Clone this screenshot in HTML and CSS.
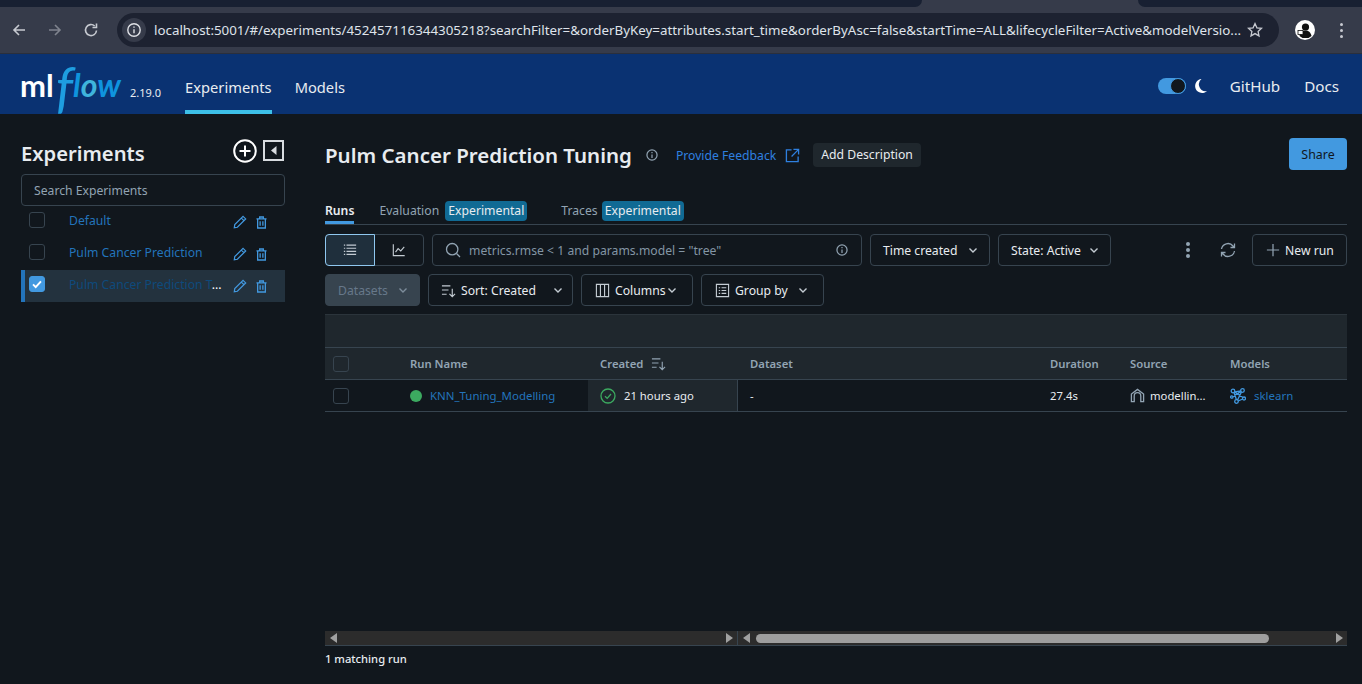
FILE: index.html
```html
<!DOCTYPE html>
<html lang="en">
<head>
    <meta charset="UTF-8" />
    <title>MLflow</title>
    <link rel="stylesheet" href="styles.css">
</head>
<body>

<!-- Browser toolbar -->
<div class="tabstrip"><div class="tab-left"></div><div class="tab-right"></div></div>
<div class="browserbar">
    <svg class="nav-icon nav-back" viewBox="0 0 16 16"><path d="M14 8H3M8 3L3 8l5 5" /></svg>
    <svg class="nav-icon nav-forward" viewBox="0 0 16 16"><path d="M2 8h11M8 3l5 5-5 5" /></svg>
    <svg class="nav-icon nav-reload" viewBox="0 0 16 16"><path d="M13.500 8.500A5.500 5.500 0 1 1 11.700 4M13.500 1.500V5.500H9.500" /></svg>
    <div class="urlbar">
        <span class="url-info"><svg viewBox="0 0 16 16"><circle cx="8" cy="8" r="6.200" /><path d="M8 7.200v4M8 4.400v1.400" /></svg></span>
        <span class="url-text">localhost:5001/#/experiments/452457116344305218?searchFilter=&amp;orderByKey=attributes.start_time&amp;orderByAsc=false&amp;startTime=ALL&amp;lifecycleFilter=Active&amp;modelVersio...</span>
        <svg class="url-star" viewBox="0 0 16 16"><path d="M8 1.600l1.900 4.200 4.600.5-3.400 3.100.9 4.500L8 11.600l-4 2.300.9-4.500L1.500 6.300l4.600-.5z" /></svg>
    </div>
    <svg class="avatar" viewBox="0 0 20 20"><circle cx="10" cy="10" r="10" fill="#fff" /><circle cx="10.500" cy="7" r="3.600" fill="#111" /><path d="M4.500 16c.5-4 3-5.500 6-5.500s5 1.500 6 5.500l-3 2h-6z" fill="#111" /><rect x="3" y="10.500" width="5" height="4" fill="#fff" stroke="#111" stroke-width=".8" /></svg>
    <div class="kebab"><i></i><i></i><i></i></div>
</div>

<!-- App header -->
<header class="topbar">
    <div class="logo"><span class="logo-ml">ml</span><span class="logo-f">f</span><span class="logo-flow">l<span class="logo-o">o</span>w</span></div>
    <span class="version">2.19.0</span>
    <nav class="nav-main">
        <a class="nav-link active">Experiments</a>
        <a class="nav-link">Models</a>
    </nav>
    <div class="nav-right">
        <div class="toggle"><span class="toggle-knob"></span></div>
        <svg class="moon" viewBox="0 0 14 16"><path d="M8.500 1A7 7 0 1 0 14 13 6.800 6.800 0 0 1 8.500 1z" /></svg>
        <a class="nav-link">GitHub</a>
        <a class="nav-link">Docs</a>
    </div>
</header>

<main class="layout">
    <aside class="sidebar">
        <div class="sidebar-head">
            <h1>Experiments</h1>
            <svg class="icon-add" viewBox="0 0 24 24"><circle cx="12" cy="12" r="10.800" /><path d="M12 6.500v11M6.500 12h11" /></svg>
            <svg class="icon-collapse" viewBox="0 0 21 21"><rect x="1" y="1" width="19" height="19" /><path class="solid" d="M13.500 6v9l-5.500-4.500z" /></svg>
        </div>
        <div class="search-exp">Search Experiments</div>
        <div class="exp-row">
            <span class="check"></span>
            <span class="exp-name">Default</span>
            <svg class="row-icon" viewBox="0 0 16 16"><path d="M11.500 1.500l3 3L5 14l-3.500.5L2 11zM9.500 3.500l3 3" /></svg>
            <svg class="row-icon trash" viewBox="0 0 12 14"><path d="M.5 3h11M4 3V1h4v2M1.800 3v10h8.400V3M4.500 5.500v5M7.500 5.500v5" /></svg>
        </div>
        <div class="exp-row">
            <span class="check"></span>
            <span class="exp-name">Pulm Cancer Prediction</span>
            <svg class="row-icon" viewBox="0 0 16 16"><path d="M11.500 1.500l3 3L5 14l-3.500.5L2 11zM9.500 3.500l3 3" /></svg>
            <svg class="row-icon trash" viewBox="0 0 12 14"><path d="M.5 3h11M4 3V1h4v2M1.800 3v10h8.400V3M4.500 5.500v5M7.500 5.500v5" /></svg>
        </div>
        <div class="exp-row selected">
            <span class="check checked"><svg viewBox="0 0 16 16"><path d="M3.500 8.500l3 3 6-6.500" /></svg></span>
            <span class="exp-name">Pulm Cancer Prediction T<span class="exp-more">...</span></span>
            <svg class="row-icon" viewBox="0 0 16 16"><path d="M11.500 1.500l3 3L5 14l-3.500.5L2 11zM9.500 3.500l3 3" /></svg>
            <svg class="row-icon trash" viewBox="0 0 12 14"><path d="M.5 3h11M4 3V1h4v2M1.800 3v10h8.400V3M4.500 5.500v5M7.500 5.500v5" /></svg>
        </div>
    </aside>

    <section class="content">
        <div class="title-row">
            <h2>Pulm Cancer Prediction Tuning</h2>
            <svg class="icon-info" viewBox="0 0 16 16"><circle cx="8" cy="8" r="5.800" /><path d="M8 7.300v4M8 4.500v1.500" /></svg>
            <a class="feedback">Provide Feedback</a>
            <svg class="icon-external" viewBox="0 0 16 16"><path d="M7 2H1.500v12.500H14V9M9 1.500h5.500V7M14.500 1.500L7 9" /></svg>
            <span class="add-desc">Add Description</span>
            <button class="btn-share">Share</button>
        </div>

        <div class="tabs">
            <span class="tab active">Runs</span>
            <span class="tab tab-eval">Evaluation <b class="tag">Experimental</b></span>
            <span class="tab tab-traces">Traces <b class="tag">Experimental</b></span>
        </div>

        <div class="toolbar first">
            <div class="view-switch">
                <span class="view-btn on"><svg viewBox="0 0 16 16"><path d="M1 2.500h1.500M4 2.500h11M1 6h1.500M4 6h11M1 9.500h1.500M4 9.500h11M1 13h1.500M4 13h11" /></svg></span>
                <span class="view-btn"><svg viewBox="0 0 16 16"><path d="M1.500 1.500v13h13M4 10.500l3-4 3 2.500 4-4.500" /></svg></span>
            </div>
            <div class="run-search">
                <svg class="icon-search" viewBox="0 0 16 16"><circle cx="7.200" cy="7.200" r="5.700" /><path d="M11.500 11.500l3.500 3.500" /></svg>
                <span class="search-text">metrics.rmse &lt; 1 and params.model = "tree"</span>
                <svg class="icon-info light" viewBox="0 0 16 16"><circle cx="8" cy="8" r="5.800" /><path d="M8 7.300v4M8 4.500v1.500" /></svg>
            </div>
            <span class="btn btn-time">Time created <svg class="chev" viewBox="0 0 12 12"><path d="M2.500 4.500L6 8l3.500-3.500" /></svg></span>
            <span class="btn btn-state">State: Active <svg class="chev" viewBox="0 0 12 12"><path d="M2.500 4.500L6 8l3.500-3.500" /></svg></span>
            <div class="toolbar-right">
                <span class="dots"><i></i><i></i><i></i></span>
                <svg class="icon-refresh" viewBox="0 0 16 16"><path d="M1.500 7A6.500 6.500 0 0 1 13 4l1.500 1.500M14.500 1.500v4h-4M14.500 9A6.500 6.500 0 0 1 3 12l-1.500-1.500M1.500 14.500v-4h4" /></svg>
                <span class="btn btn-new"><svg class="icon-plus" viewBox="0 0 16 16"><path d="M8 1v14M1 8h14" /></svg>New run</span>
            </div>
        </div>

        <div class="toolbar">
            <span class="btn btn-datasets">Datasets <svg class="chev" viewBox="0 0 12 12"><path d="M2.500 4.500L6 8l3.500-3.500" /></svg></span>
            <span class="btn btn-sort"><svg class="icon-sort" viewBox="0 0 16 16"><path d="M1 3h9M1 7.500h7M1 12h5M12 6v8.500M9 11.500l3 3 3-3" /></svg>Sort: Created <svg class="chev" viewBox="0 0 12 12"><path d="M2.500 4.500L6 8l3.500-3.500" /></svg></span>
            <span class="btn btn-cols"><svg class="icon-cols" viewBox="0 0 16 16"><path d="M1.500 1.500h13v13h-13zM5.800 1.500v13M10.200 1.500v13" /></svg>Columns <svg class="chev" viewBox="0 0 12 12"><path d="M2.500 4.500L6 8l3.500-3.500" /></svg></span>
            <span class="btn btn-group"><svg class="icon-groupby" viewBox="0 0 16 16"><path d="M1.500 1.500h13v13h-13zM4 5h1.500M7 5h5M4 8h1.500M7 8h5M4 11h1.500M7 11h5" /></svg>Group by <svg class="chev" viewBox="0 0 12 12"><path d="M2.500 4.500L6 8l3.500-3.500" /></svg></span>
        </div>

        <div class="table">
            <div class="table-band"></div>
            <div class="table-row table-head">
                <div class="cell"><span class="check"></span></div>
                <div class="cell">Run Name</div>
                <div class="cell">Created <svg class="icon-sort head-sort" viewBox="0 0 16 16"><path d="M1 3h9M1 7.500h7M1 12h5M12 6v8.500M9 11.500l3 3 3-3" /></svg></div>
                <div class="cell">Dataset</div>
                <div class="cell">Duration</div>
                <div class="cell">Source</div>
                <div class="cell">Models</div>
            </div>
            <div class="table-row table-body">
                <div class="cell"><span class="check"></span></div>
                <div class="cell"><span class="dot"></span><a class="run-link">KNN_Tuning_Modelling</a></div>
                <div class="cell cell-created">
                    <svg class="icon-ok" viewBox="0 0 16 16"><circle cx="8" cy="8" r="7" /><path d="M5 8.200l2.200 2.200L11 6" /></svg>
                    21 hours ago
                </div>
                <div class="cell">-</div>
                <div class="cell">27.4s</div>
                <div class="cell"><svg class="icon-home" viewBox="0 0 16 16"><path d="M1.500 14.500V6.500L8 1.500l6.500 5v8h-3V8.500a3.500 3.500 0 0 0-7 0v6z" /></svg>modellin...</div>
                <div class="cell"><svg class="icon-model" viewBox="0 0 16 16"><circle cx="3" cy="3" r="1.800" /><circle cx="12.500" cy="2.500" r="1.800" /><circle cx="6.500" cy="13.500" r="1.800" /><circle cx="14" cy="10.500" r="1.500" /><circle cx="1.800" cy="9" r="1.200" /><path d="M4.500 4L11 3M4 4.500l2.500 7.500M11.500 4L7.500 12M8.200 13l4.500-2M4.500 4l8.500 5.500M3 8.500l8-5" /></svg><a class="run-link">sklearn</a></div>
            </div>
            <div class="table-space"></div>
            <div class="scrollbars">
                <div class="scroll scroll-left"><i class="arrow arrow-l"></i><i class="arrow arrow-r"></i></div>
                <div class="scroll scroll-right"><i class="arrow arrow-l"></i><span class="thumb"></span><i class="arrow arrow-r"></i></div>
            </div>
        </div>
        <div class="matching">1 matching run</div>
    </section>
</main>

</body>
</html>
```
FILE: styles.css
```css
html, body {
    height: 100%;
}
body {
    margin: 0;
    height: 684px;
    overflow: hidden;
    display: flex;
    flex-direction: column;
    background: #11171d;
    color: #e8ecf0;
    font-family: "Noto Sans", "Open Sans", sans-serif;
    font-size: 12.2px;
}
svg {
    fill: none;
    stroke: currentColor;
    flex: none;
}
h1, h2 {
    margin: 0;
    font-weight: 600;
}

/* Browser toolbar */
.tabstrip {
    height: 7px;
    background: #363b4a;
    flex: none;
    display: flex;
    justify-content: space-between;
}
.tab-left {
    width: 922px;
    background: #182032;
    border-radius: 0 0 8px 0;
}
.tab-right {
    width: 224px;
    background: #182032;
    border-radius: 0 0 0 8px;
}
.browserbar {
    height: 46px;
    flex: none;
    background: #363b4a;
    border-bottom: 1px solid #2a2f3c;
    display: flex;
    align-items: center;
}
.nav-icon {
    width: 16px;
    height: 16px;
    stroke: #c7cad1;
    stroke-width: 1.6;
}
.nav-back { margin-left: 11px; }
.nav-forward { margin-left: 20px; stroke: #7f838e; }
.nav-reload { margin-left: 20px; }
.urlbar {
    margin-left: 18px;
    width: 1162px;
    height: 34px;
    background: #1d2231;
    border-radius: 17px;
    display: flex;
    align-items: center;
}
.url-info {
    width: 24px;
    height: 24px;
    margin-left: 5px;
    border-radius: 50%;
    background: #363b4a;
    display: flex;
    align-items: center;
    justify-content: center;
}
.url-info svg {
    width: 16px;
    height: 16px;
    stroke: #dfe1e6;
    stroke-width: 1.4;
}
.url-text {
    margin-left: 8px;
    width: 1053px;
    white-space: nowrap;
    font-size: 13.35px;
    color: #dfe3ea;
}
.url-star {
    width: 16px;
    height: 16px;
    margin-left: 40px;
    stroke: #c7cad1;
    stroke-width: 1.3;
}
.avatar {
    width: 20px;
    height: 20px;
    margin-left: 16px;
    stroke: none;
}
.kebab {
    margin-left: 25px;
    display: flex;
    flex-direction: column;
    gap: 3px;
}
.kebab i {
    width: 3px;
    height: 3px;
    border-radius: 50%;
    background: #c7cad1;
}

/* App header */
.topbar {
    height: 60px;
    flex: none;
    background: #0a3272;
    display: flex;
    align-items: center;
    padding: 0 23px 0 20px;
}
.logo {
    width: 108px;
    height: 60px;
    align-self: flex-start;
    font-family: "Lato", sans-serif;
    line-height: 60px;
    font-size: 33px;
    white-space: nowrap;
}
.logo-ml {
    color: #fff;
    font-weight: 700;
    font-size: 31px;
}
.logo-f {
    color: #1e9ee0;
    font-style: italic;
    font-size: 54px;
    line-height: 0;
    vertical-align: -9px;
    margin-left: 2px;
}
.logo-flow {
    color: #0f94de;
    font-style: italic;
    font-weight: 700;
    font-size: 32px;
}
.logo-o {
    color: #3fb4dc;
}
.version {
    font-size: 11px;
    margin: 16px 0 0 2px;
    color: #e8ecf0;
}
.nav-main {
    margin-left: 24px;
    display: flex;
    gap: 23px;
    align-self: stretch;
}
.nav-link {
    color: #e8ecf0;
    font-size: 14.7px;
    line-height: 66px;
    display: block;
}
.nav-main .active {
    border-bottom: 4px solid #3dc0e8;
    box-sizing: border-box;
    height: 60px;
}
.nav-right {
    margin-left: auto;
    padding-top: 4px;
    display: flex;
    align-items: center;
}
.toggle {
    width: 28px;
    height: 16px;
    border-radius: 8px;
    background: #4299e0;
    display: flex;
    justify-content: flex-end;
}
.toggle-knob {
    width: 14px;
    height: 14px;
    border-radius: 50%;
    background: #11171d;
    border: 1px solid #4299e0;
}
.moon {
    width: 14px;
    height: 16px;
    margin: 0 15px 0 7px;
    fill: #fff;
    stroke: none;
}
.nav-right .nav-link {
    font-size: 15.2px;
    line-height: 22px;
    margin-left: 8px;
    margin-right: 16px;
}
.nav-right .nav-link:last-child {
    margin-right: 0;
}

/* Page */
.layout {
    flex: 1;
    display: flex;
    min-height: 0;
}
.sidebar {
    width: 264px;
    margin-left: 21px;
    padding-top: 24px;
    flex: none;
}
.sidebar-head {
    height: 32px;
    margin-bottom: 4px;
    display: flex;
    align-items: center;
}
.sidebar-head h1 {
    font-size: 20.2px;
    flex: 1;
    margin-top: -2px;
}
.icon-add {
    width: 24px;
    height: 24px;
    align-self: flex-start;
    margin-top: 1px;
    stroke: #fff;
    stroke-width: 2;
}
.icon-collapse {
    width: 21px;
    height: 21px;
    align-self: flex-start;
    margin: 2px 1px 0 6px;
    stroke: #d8dce0;
    stroke-width: 2;
}
.icon-collapse .solid {
    fill: #d8dce0;
    stroke: none;
}
.search-exp {
    height: 32px;
    box-sizing: border-box;
    border: 1px solid #37444f;
    border-radius: 4px;
    padding: 0 12px;
    line-height: 31px;
    color: #92a4b3;
}
.exp-row {
    height: 32px;
    display: flex;
    align-items: center;
    padding-left: 8px;
    box-sizing: border-box;
}
.exp-row.selected {
    background: #23323e;
    border-left: 4px solid #2374bb;
    padding-left: 4px;
}
.check {
    width: 16px;
    height: 16px;
    box-sizing: border-box;
    border: 1px solid #37444f;
    border-radius: 3px;
    display: block;
    flex: none;
}
.exp-row .check {
    margin-top: -4px;
}
.check.checked {
    background: #4299e0;
    border-color: #4299e0;
    display: flex;
}
.check.checked svg {
    width: 14px;
    height: 14px;
    stroke: #fff;
    stroke-width: 2.2;
}
.exp-name {
    margin-left: 24px;
    width: 157px;
    white-space: nowrap;
    color: #2374bb;
    margin-top: -3px;
}
.selected .exp-name {
    color: #0e4a7c;
}
.exp-more {
    color: #fff;
}
.row-icon {
    width: 14px;
    height: 14px;
    margin-left: 7px;
    stroke: #4299e0;
    stroke-width: 1.4;
}
.row-icon.trash {
    width: 11px;
    height: 13px;
    margin-left: 9px;
}

.content {
    flex: 1;
    margin: 0 15px 0 40px;
    padding-top: 24px;
    min-width: 0;
    display: flex;
    flex-direction: column;
}
.title-row {
    height: 32px;
    display: flex;
    align-items: center;
    flex: none;
}
.title-row h2 {
    font-size: 20.5px;
    margin-top: 2px;
}
.title-row .icon-info,
.title-row .feedback,
.title-row .icon-external,
.title-row .add-desc {
    margin-top: 2px;
}
.icon-info {
    width: 14px;
    height: 14px;
    margin-left: 13px;
    stroke: #92a4b3;
    stroke-width: 1.4;
}
.feedback {
    margin-left: 17px;
    color: #2f80e0;
}
.icon-external {
    width: 15px;
    height: 15px;
    margin-left: 9px;
    stroke: #2f80e0;
    stroke-width: 1.4;
}
.add-desc {
    margin-left: 13px;
    height: 24px;
    line-height: 24px;
    padding: 0 8px;
    background: #1f272d;
    border-radius: 4px;
}
.btn-share {
    margin-left: auto;
    width: 58px;
    height: 32px;
    background: #4299e0;
    color: #11171d;
    border: none;
    border-radius: 4px;
    font: inherit;
    font-size: 12.4px;
}

.tabs {
    margin-top: 24px;
    height: 31px;
    box-sizing: border-box;
    border-bottom: 1px solid #37444f;
    display: flex;
    gap: 25px;
    flex: none;
}
.tab {
    color: #92a4b3;
    line-height: 20px;
    height: 30px;
    box-sizing: border-box;
    padding-top: 7px;
    white-space: nowrap;
}
.tab-traces {
    margin-left: 9px;
}
.tab.active {
    color: #e8ecf0;
    font-weight: 600;
    border-bottom: 3px solid #4299e0;
}
.tag {
    display: inline-block;
    background: #106a94;
    color: #e8ecf0;
    font-weight: 400;
    line-height: 20px;
    padding: 0 3px;
    border-radius: 4px;
    margin-left: 1px;
}
.tab-eval .tag {
    margin-left: 3px;
}

.toolbar {
    margin-top: 8px;
    height: 32px;
    display: flex;
    gap: 8px;
    flex: none;
}
.toolbar.first {
    margin-top: 9px;
}
.view-switch {
    width: 99px;
    display: flex;
    border: 1px solid #37444f;
    border-radius: 4px;
    box-sizing: border-box;
}
.view-btn {
    flex: 1;
    display: flex;
    align-items: center;
    justify-content: center;
}
.view-btn svg {
    width: 14px;
    height: 14px;
    stroke: #c4ccd3;
    stroke-width: 1.3;
}
.view-btn.on {
    flex: 0 0 50px;
    box-sizing: border-box;
    margin: -1px 0 -1px -1px;
    background: #1f2f3c;
    border: 1px solid #8fc7ef;
    border-radius: 4px 0 0 4px;
}
.run-search {
    width: 430px;
    box-sizing: border-box;
    border: 1px solid #37444f;
    border-radius: 4px;
    display: flex;
    align-items: center;
    padding: 0 12px;
}
.icon-search {
    width: 16px;
    height: 16px;
    stroke: #92a4b3;
    stroke-width: 1.3;
}
.search-text {
    margin-left: 8px;
    flex: 1;
    color: #8396a5;
    white-space: nowrap;
}
.run-search .icon-info {
    margin-left: 0;
}
.btn {
    height: 32px;
    box-sizing: border-box;
    border: 1px solid #37444f;
    border-radius: 4px;
    display: flex;
    align-items: center;
    padding: 0 0 0 12px;
    white-space: nowrap;
}
.chev {
    width: 12px;
    height: 12px;
    margin-left: auto;
    stroke: #c4ccd3;
    stroke-width: 1.4;
}
.btn-time { width: 120px; padding-right: 10px; }
.btn-state { width: 113px; padding-right: 10px; }
.btn-datasets { width: 95px; padding-right: 10px; }
.btn-sort { width: 145px; padding-right: 8px; }
.btn-cols { width: 112px; padding-left: 13px; padding-right: 14px; }
.btn-group { width: 123px; padding-left: 13px; padding-right: 14px; }
.btn-new { width: 95px; padding-left: 13px; margin-left: 16px; }
.toolbar-right {
    margin-left: auto;
    display: flex;
    align-items: center;
}
.dots {
    display: flex;
    flex-direction: column;
    gap: 2px;
}
.dots i {
    width: 4px;
    height: 4px;
    border-radius: 50%;
    background: #92a4b3;
}
.icon-refresh {
    width: 16px;
    height: 16px;
    margin-left: 30px;
    stroke: #92a4b3;
    stroke-width: 1.3;
}
.icon-plus {
    width: 14px;
    height: 14px;
    margin-right: 5px;
    stroke: #92a4b3;
    stroke-width: 1.4;
}
.btn-datasets {
    background: #37444f;
    color: #67788a;
}
.btn-datasets .chev {
    stroke: #7d8d9b;
}
.icon-sort, .icon-cols, .icon-groupby {
    width: 15px;
    height: 15px;
    margin-right: 5px;
    stroke: #c4ccd3;
    stroke-width: 1.2;
}

/* Runs table */
.table {
    margin-top: 8px;
    flex: 1;
    min-height: 0;
    display: flex;
    flex-direction: column;
}
.table-band {
    height: 34px;
    box-sizing: border-box;
    background: #1f272d;
    border-top: 1px solid #2b343b;
    border-bottom: 1px solid #37444f;
    flex: none;
}
.table-row {
    height: 32px;
    box-sizing: border-box;
    display: grid;
    grid-template-columns: 73px 190px 150px 300px 80px 100px 129px;
    border-bottom: 1px solid #37444f;
    flex: none;
    font-size: 11.3px;
}
.table-head {
    background: #1f272d;
    color: #92a4b3;
    font-weight: 600;
}
.cell {
    display: flex;
    align-items: center;
    padding-left: 12px;
    white-space: nowrap;
    min-width: 0;
}
.cell:first-child {
    padding-left: 8px;
}
.head-sort {
    margin: 0 0 0 8px;
    stroke: #92a4b3;
}
.cell-created {
    background: #1f272d;
    border-right: 1px solid #37444f;
}
.dot {
    width: 12px;
    height: 12px;
    border-radius: 50%;
    background: #3caa60;
    margin-right: 8px;
}
.run-link {
    color: #2374bb;
    font-size: 11.45px;
}
.icon-ok {
    width: 16px;
    height: 16px;
    margin-right: 8px;
    stroke: #3caa60;
    stroke-width: 1.3;
}
.icon-home {
    width: 15px;
    height: 15px;
    margin-right: 5px;
    stroke: #92a4b3;
    stroke-width: 1.4;
}
.icon-model {
    width: 16px;
    height: 16px;
    margin-right: 8px;
    stroke: #4299e0;
    stroke-width: 1.3;
}
.table-space {
    flex: 1;
}
.scrollbars {
    height: 15px;
    flex: none;
    display: flex;
    border-bottom: 1px solid #37444f;
    box-sizing: border-box;
}
.scroll {
    background: #2c2c2c;
    display: flex;
    align-items: center;
    justify-content: space-between;
    padding: 0 4px 0 5px;
}
.scroll-left {
    width: 413px;
    box-sizing: border-box;
    border-right: 1px solid #37444f;
}
.scroll-right {
    flex: 1;
    min-width: 0;
}
.arrow {
    width: 0;
    height: 0;
    border-top: 5px solid transparent;
    border-bottom: 5px solid transparent;
}
.arrow-l {
    border-right: 7px solid #a0a0a0;
}
.arrow-r {
    border-left: 7px solid #a0a0a0;
}
.thumb {
    width: 513px;
    height: 9px;
    background: #9e9e9e;
    border-radius: 5px;
    margin: 0 auto 0 6px;
}
.matching {
    height: 38px;
    line-height: 26px;
    font-size: 11.2px;
    font-weight: 500;
    flex: none;
}
```
